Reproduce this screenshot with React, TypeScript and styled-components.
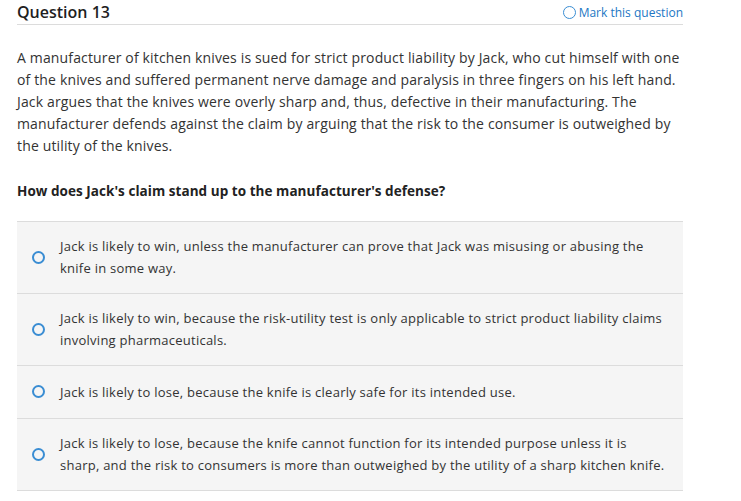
import styled, { createGlobalStyle } from 'styled-components';

const GlobalStyle = createGlobalStyle`
  body {
    margin: 0;
    background: #fff;
    font-family: "Open Sans", "Liberation Sans", Arial, sans-serif;
    color: #333;
  }
`;

const Page = styled.div`
  width: 666px;
  padding: 0 17px;
`;

const Header = styled.div`
  display: flex;
  align-items: center;
  justify-content: space-between;
  height: 24px;
  border-bottom: 1px solid #dcdcdc;
`;

const Title = styled.h1`
  margin: 0;
  font-size: 16px;
  font-weight: 600;
  color: #1f1f1f;
`;

const MarkButton = styled.button`
  display: flex;
  align-items: center;
  gap: 3px;
  padding: 0;
  border: 0;
  background: none;
  font-family: inherit;
  font-size: 12px;
  color: #2277c4;
  cursor: pointer;
`;

const Ring = styled.span<{ $size: number; $width: number }>`
  display: inline-block;
  flex: none;
  box-sizing: border-box;
  width: ${(p) => p.$size}px;
  height: ${(p) => p.$size}px;
  border: ${(p) => p.$width}px solid #3a8dd3;
  border-radius: 50%;
`;

const Prompt = styled.p`
  margin: 22px 0 0;
  font-size: 14px;
  letter-spacing: 0.15px;
  line-height: 22px;
`;

const Ask = styled.p`
  margin: 23px 0 0;
  font-size: 13.5px;
  letter-spacing: 0.05px;
  line-height: 22px;
  font-weight: 700;
  color: #222;
`;

const Choices = styled.ul`
  list-style: none;
  margin: 19px 0 0;
  padding: 0;
  border-bottom: 1px solid #dcdcdc;
`;

const Choice = styled.li`
  display: flex;
  align-items: center;
  gap: 15px;
  padding: 13px 18px 14px 15px;
  background: #f5f5f5;
  border-top: 1px solid #dcdcdc;
`;

const ChoiceText = styled.span<{ $single?: boolean }>`
  font-size: 13px;
  letter-spacing: 0.25px;
  line-height: 22px;
  padding: ${(p) => (p.$single ? '2px 0 1px' : '0')};
`;

const choices = [
  'Jack is likely to win, unless the manufacturer can prove that Jack was misusing or abusing the knife in some way.',
  'Jack is likely to win, because the risk-utility test is only applicable to strict product liability claims involving pharmaceuticals.',
  'Jack is likely to lose, because the knife is clearly safe for its intended use.',
  'Jack is likely to lose, because the knife cannot function for its intended purpose unless it is sharp, and the risk to consumers is more than outweighed by the utility of a sharp kitchen knife.',
];

export default function App() {
  return (
    <>
      <GlobalStyle />
      <Page>
        <Header>
          <Title>Question 13</Title>
          <MarkButton>
            <Ring $size={13} $width={1.5} />
            Mark this question
          </MarkButton>
        </Header>
        <Prompt>
          A manufacturer of kitchen knives is sued for strict product liability by Jack, who cut himself with one
          of the knives and suffered permanent nerve damage and paralysis in three fingers on his left hand.
          Jack argues that the knives were overly sharp and, thus, defective in their manufacturing. The
          manufacturer defends against the claim by arguing that the risk to the consumer is outweighed by
          the utility of the knives.
        </Prompt>
        <Ask>How does Jack's claim stand up to the manufacturer's defense?</Ask>
        <Choices>
          {choices.map((c, i) => (
            <Choice key={i}>
              <Ring $size={13} $width={2} />
              <ChoiceText $single={i === 2}>{c}</ChoiceText>
            </Choice>
          ))}
        </Choices>
      </Page>
    </>
  );
}
